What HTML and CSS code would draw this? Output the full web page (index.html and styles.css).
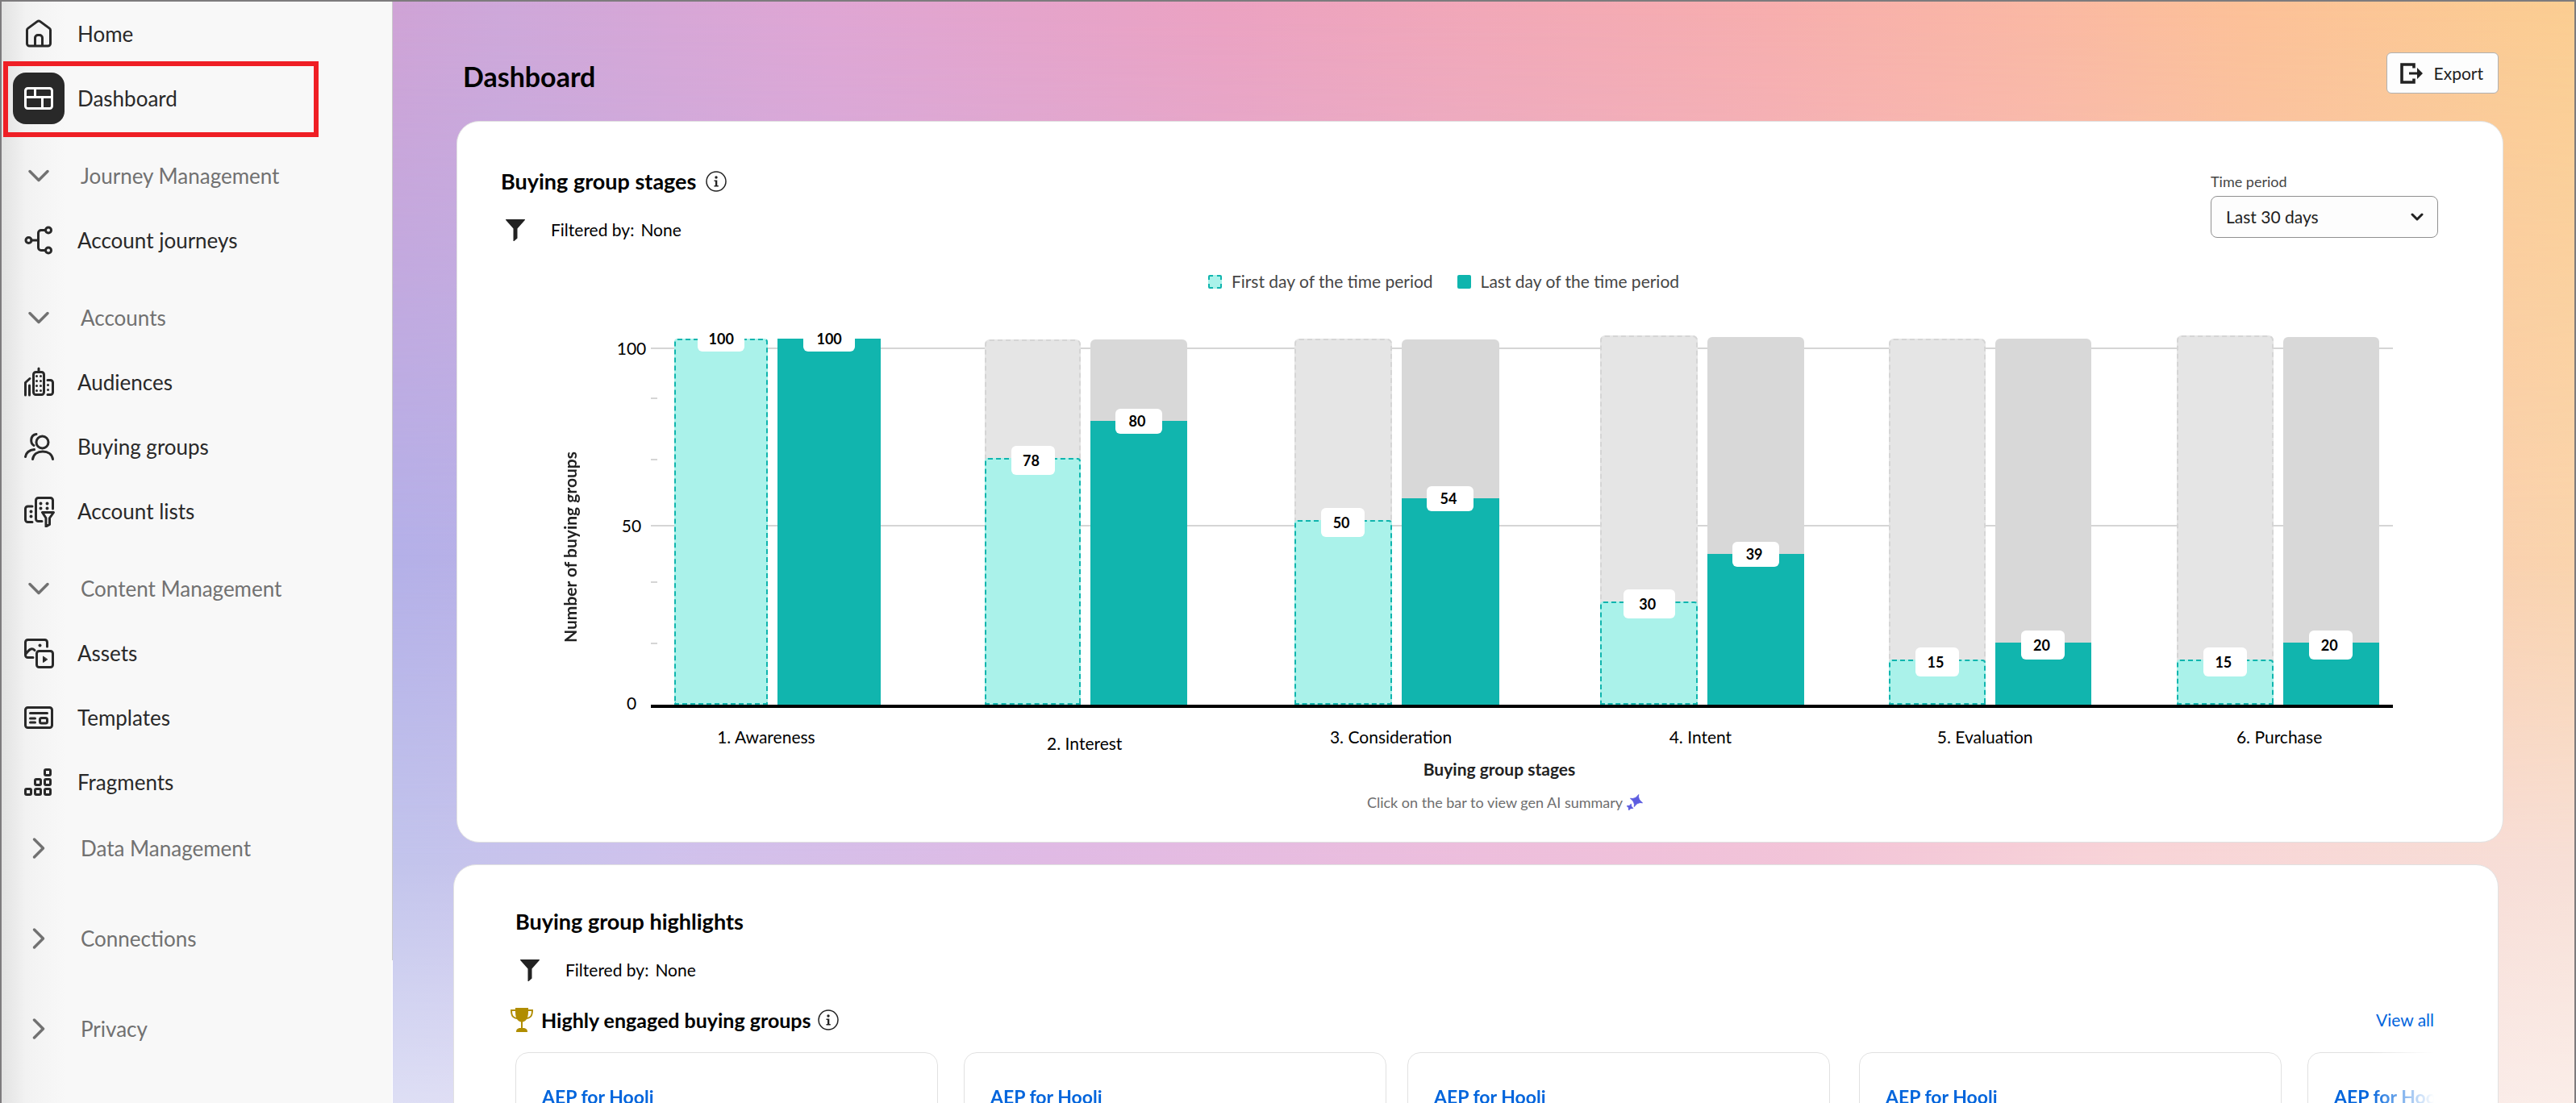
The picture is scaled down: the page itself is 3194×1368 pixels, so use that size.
FILE: index.html
```html
<!DOCTYPE html>
<html lang="en">
<head>
<meta charset="utf-8">
<title>Dashboard</title>
<link rel="stylesheet" href="styles.css">
</head>
<body>
<svg class="sprite" aria-hidden="true">
  <symbol id="chevron-down" viewBox="0 0 40 40"><path d="M9 14.500l11 11 11-11" fill="none" stroke="currentColor" stroke-width="3.500" stroke-linecap="round" stroke-linejoin="round"/></symbol>
  <symbol id="chevron-right" viewBox="0 0 40 40"><path d="M14.500 9l11 11-11 11" fill="none" stroke="currentColor" stroke-width="3.500" stroke-linecap="round" stroke-linejoin="round"/></symbol>
  <symbol id="funnel" viewBox="0 0 24 27"><path d="M.5 0h23a.5.5 0 0 1 .3.900L14.500 11.500V23.500L10.500 27H9.500V11.500L.2.900A.5.5 0 0 1 .5 0z" fill="#222"/></symbol>
  <symbol id="info" viewBox="0 0 26 26"><circle cx="13" cy="13" r="12" fill="none" stroke="#222" stroke-width="1.500"/><circle cx="13" cy="8" r="1.700" fill="#222"/><path d="M10.500 11.500h3.800V18h1.500v1.400h-5.300V18H12v-5.100h-1.500z" fill="#222"/></symbol>
</svg>
<div class="app">
  <nav class="sidebar" aria-label="Main">
    <ul class="nav">
      <li><a class="nav-item" href="#">
        <svg class="nav-icon" viewBox="0 0 40 40"><path d="M5.500 15.500V32a3 3 0 0 0 3 3h23a3 3 0 0 0 3-3V15.500a3 3 0 0 0-1.200-2.400l-11.500-8.500a3 3 0 0 0-3.600 0L6.700 13.100a3 3 0 0 0-1.200 2.400zM15.500 35V25a3.500 3.500 0 0 1 3.500-3.500h2a3.500 3.500 0 0 1 3.500 3.500v10"/></svg>
        <span>Home</span></a></li>
      <li><a class="nav-item nav-item--current" href="#" aria-current="page">
        <span class="nav-tile"><svg class="nav-icon" viewBox="0 0 40 40"><rect x="3.500" y="7.500" width="33" height="25" rx="3"/><path d="M4 18.500h32M15.500 8v10M24.500 19v13"/></svg></span>
        <span>Dashboard</span></a></li>
      <li><button class="nav-section" type="button" aria-expanded="true"><svg class="nav-icon"><use href="#chevron-down"/></svg><span>Journey Management</span></button></li>
      <li><a class="nav-item" href="#">
        <svg class="nav-icon" viewBox="0 0 40 40"><circle cx="7.500" cy="20" r="3.500"/><circle cx="32" cy="7.500" r="3.500"/><circle cx="32" cy="32.500" r="3.500"/><path d="M11 20h8.500M28.500 7.500H23a3.500 3.500 0 0 0-3.500 3.500v18a3.500 3.500 0 0 0 3.500 3.500h5.500"/></svg>
        <span>Account journeys</span></a></li>
      <li><button class="nav-section" type="button" aria-expanded="true"><svg class="nav-icon"><use href="#chevron-down"/></svg><span>Accounts</span></button></li>
      <li><a class="nav-item" href="#">
        <svg class="nav-icon" viewBox="0 0 40 40"><rect x="13.500" y="7.500" width="13" height="28" rx="3"/><path d="M20 3v4M3.500 36V20.500L9 15.500M8.500 24v12M31 17.500h3.500a3 3 0 0 1 3 3v12a3 3 0 0 1-3 3H31"/><path class="dots" d="M17.500 12.500h0M22.500 12.500h0M17.500 18.500h0M22.500 18.500h0M17.500 24.500h0M22.500 24.500h0M17.500 30.500h0M22.500 30.500h0M31.500 23.500h0M31.500 29.500h0"/></svg>
        <span>Audiences</span></a></li>
      <li><a class="nav-item" href="#">
        <svg class="nav-icon" viewBox="0 0 40 40"><circle cx="24.500" cy="14.500" r="7.500"/><path d="M12.500 35.500c1-6 6-9.500 12.500-9.500s11.500 3.500 12.500 9.500M3.500 32.500c.5-4.500 4.500-8.500 11-9M14 18.500c-5-3-4.500-13 3-14"/></svg>
        <span>Buying groups</span></a></li>
      <li><a class="nav-item" href="#">
        <svg class="nav-icon" viewBox="0 0 40 40"><path d="M24 32.500h-4.500a3 3 0 0 1-3-3v-23a3 3 0 0 1 3-3h15a3 3 0 0 1 3 3V17M12 14H6.500a3 3 0 0 0-3 3v13.500a3 3 0 0 0 3 3H12M24.500 21.500h14l-5 7v8l-4.500 2.500v-10.500z"/><path class="dots dots--large" d="M22.500 10.500h0M30.500 10.500h0M22.500 16.500h0M30.500 16.500h0M10.500 20.500h0M10.500 26.500h0"/></svg>
        <span>Account lists</span></a></li>
      <li><button class="nav-section" type="button" aria-expanded="true"><svg class="nav-icon"><use href="#chevron-down"/></svg><span>Content Management</span></button></li>
      <li><a class="nav-item" href="#">
        <svg class="nav-icon" viewBox="0 0 40 40"><path d="M13 25.500H6.500a3 3 0 0 1-3-3v-16a3 3 0 0 1 3-3h21a3 3 0 0 1 3 3V12M4 21c4-5 7-8.500 11-4.500"/><rect x="17.500" y="17.500" width="20" height="20" rx="3"/><path class="dots dots--large" d="M21.500 10.500h0"/><path d="M25.500 24.500v7l5-3.500z" fill="currentColor" stroke-width="1"/></svg>
        <span>Assets</span></a></li>
      <li><a class="nav-item" href="#">
        <svg class="nav-icon" viewBox="0 0 40 40"><rect x="3.500" y="7.500" width="33" height="25" rx="3"/><path d="M9.500 14.500h21M9.500 21h6M9.500 26h6"/><rect x="21.500" y="20.500" width="9" height="6.500" rx="2"/></svg>
        <span>Templates</span></a></li>
      <li><a class="nav-item" href="#">
        <svg class="nav-icon" viewBox="0 0 40 40"><rect x="27.500" y="4.500" width="7" height="7" rx="1.500"/><rect x="15.500" y="16.500" width="7" height="7" rx="1.500"/><rect x="27.500" y="16.500" width="7" height="7" rx="1.500"/><rect x="3.500" y="28.500" width="7" height="7" rx="1.500"/><rect x="15.500" y="28.500" width="7" height="7" rx="1.500"/><rect x="27.500" y="28.500" width="7" height="7" rx="1.500"/></svg>
        <span>Fragments</span></a></li>
    </ul>
    <ul class="nav nav--collapsed">
      <li><button class="nav-section" type="button" aria-expanded="false"><svg class="nav-icon"><use href="#chevron-right"/></svg><span>Data Management</span></button></li>
      <li><button class="nav-section" type="button" aria-expanded="false"><svg class="nav-icon"><use href="#chevron-right"/></svg><span>Connections</span></button></li>
      <li><button class="nav-section" type="button" aria-expanded="false"><svg class="nav-icon"><use href="#chevron-right"/></svg><span>Privacy</span></button></li>
    </ul>
  </nav>

  <main class="main">
    <header class="page-header">
      <h1 class="page-title">Dashboard</h1>
      <button class="export" type="button">
        <svg class="export-icon" viewBox="0 0 28 26"><path d="M17 6.500V2H2v22h15v-4.500" fill="none" stroke="#222" stroke-width="3.600"/><path d="M11 11.500h10V6l7 7-7 7v-5.500H11z" fill="#222"/></svg>
        <span>Export</span>
      </button>
    </header>

    <section class="card stages">
      <div class="card-head">
        <div>
          <div class="title-row"><h2 class="card-title">Buying group stages</h2><svg class="info" role="img" aria-label="Info"><use href="#info"/></svg></div>
          <p class="filter"><svg class="funnel"><use href="#funnel"/></svg><span>Filtered by:</span><span>None</span></p>
        </div>
        <div class="period">
          <label class="period-label" for="period">Time period</label>
          <div class="period-box">
            <select class="period-select" id="period"><option>Last 30 days</option></select>
            <svg class="period-chevron" viewBox="0 0 16 10"><path d="M2 2l6 6 6-6" fill="none" stroke="#222" stroke-width="3" stroke-linecap="round" stroke-linejoin="round"/></svg>
          </div>
        </div>
      </div>

      <ul class="legend">
        <li><span class="swatch swatch--first"></span>First day of the time period</li>
        <li><span class="swatch swatch--last"></span>Last day of the time period</li>
      </ul>

      <div class="chart">
        <div class="axis-title-y"><span>Number of buying groups</span></div>
        <div class="axis-y"><span>100</span><span>50</span><span>0</span></div>
        <div class="plot">
          <div class="grid-lines"><i class="line"></i><i class="tick"></i><i class="tick"></i><i class="line"></i><i class="tick"></i><i class="tick"></i></div>
          <div class="bars">
            <div class="group group--full">
              <div class="track"><div class="bar bar--first" style="height:454px"><b class="value value--short">100</b></div></div>
              <div class="track"><div class="bar bar--last" style="height:454px"><b class="value value--short value--wide">100</b></div></div>
            </div>
            <div class="group">
              <div class="track track--first" style="height:453px"><div class="bar bar--first" style="height:306px"><b class="value">78</b></div></div>
              <div class="track track--last" style="height:453px"><div class="bar bar--last" style="height:352px"><b class="value value--short">80</b></div></div>
            </div>
            <div class="group">
              <div class="track track--first" style="height:454px"><div class="bar bar--first" style="height:229px"><b class="value">50</b></div></div>
              <div class="track track--last" style="height:453px"><div class="bar bar--last" style="height:256px"><b class="value value--short">54</b></div></div>
            </div>
            <div class="group">
              <div class="track track--first" style="height:458px"><div class="bar bar--first" style="height:128px"><b class="value value--wide">30</b></div></div>
              <div class="track track--last" style="height:456px"><div class="bar bar--last" style="height:187px"><b class="value value--short">39</b></div></div>
            </div>
            <div class="group">
              <div class="track track--first" style="height:454px"><div class="bar bar--first" style="height:56px"><b class="value">15</b></div></div>
              <div class="track track--last" style="height:454px"><div class="bar bar--last" style="height:77px"><b class="value">20</b></div></div>
            </div>
            <div class="group">
              <div class="track track--first" style="height:458px"><div class="bar bar--first" style="height:56px"><b class="value">15</b></div></div>
              <div class="track track--last" style="height:456px"><div class="bar bar--last" style="height:77px"><b class="value">20</b></div></div>
            </div>
          </div>
        </div>
        <div class="axis-x">
          <span>1. Awareness</span><span class="lowered">2. Interest</span><span>3. Consideration</span><span>4. Intent</span><span>5. Evaluation</span><span>6. Purchase</span>
        </div>
      </div>
      <p class="axis-title-x">Buying group stages</p>
      <p class="hint">Click on the bar to view gen AI summary
        <svg class="sparkle" viewBox="0 0 20 20"><path d="M14.700.500Q13.500 6.500 19.500 10.700Q13 9.500 9.300 15.500Q10.500 9.500 4.500 5.300Q11 6.500 14.700.500zM5.400 12.200Q4.700 15.500 7.800 17.400Q4.500 16.700 2.600 19.800Q3.300 16.500.200 14.600Q3.500 15.300 5.400 12.200z" fill="#5c5ce0" stroke="#5c5ce0" stroke-linejoin="round"/></svg>
      </p>
    </section>

    <section class="card highlights">
      <h2 class="card-title">Buying group highlights</h2>
      <p class="filter"><svg class="funnel"><use href="#funnel"/></svg><span>Filtered by:</span><span>None</span></p>
      <div class="engaged-head">
        <svg class="trophy" viewBox="0 0 28 30"><path d="M6 0h16v2h6c0 8-2 11-8 12-1 2-3 3-5 3.500V25h2c3 1 4 2 4 5H7c0-3 1-4 4-5h2v-7.500C11 17 9 16 8 14 2 13 0 10 0 2h6zM6 4H2c.2 5 1.500 7 5 8C6.300 10 6 7 6 4zm16 0c0 3-.3 6-1 8 3.500-1 4.800-3 5-8z" fill="#b08d00"/></svg>
        <h3 class="engaged-title">Highly engaged buying groups</h3>
        <svg class="info" role="img" aria-label="Info"><use href="#info"/></svg>
        <a class="view-all" href="#">View all</a>
      </div>
      <ul class="tiles">
        <li class="tile"><a href="#">AEP for Hooli</a></li>
        <li class="tile"><a href="#">AEP for Hooli</a></li>
        <li class="tile"><a href="#">AEP for Hooli</a></li>
        <li class="tile"><a href="#">AEP for Hooli</a></li>
        <li class="tile"><a href="#">AEP for Hooli</a></li>
      </ul>
    </section>
  </main>
</div>
</body>
</html>
```
FILE: styles.css
```css
* { box-sizing: border-box; }

body {
  margin: 0;
  font-family: Lato, "Noto Sans", sans-serif;
  font-size: 21px;
  line-height: 28px;
  color: #000;
}

h1, h2, h3, p, ul { margin: 0; padding: 0; }
ul { list-style: none; }
button, select { font: inherit; color: inherit; }
a { color: #0265dc; text-decoration: none; }
.sprite { display: none; }

.app {
  display: flex;
  height: 100vh;
  overflow: hidden;
  border: 2px solid #7d7b7d;
  border-bottom: 0;
}

/* Sidebar */
.sidebar {
  flex: 0 0 485px;
  border-right: 1px solid;
  border-image: linear-gradient(#ccc 87%, #fff 87%) 1;
  background: linear-gradient(90deg, #e2e2e2, #f2f2f2 30px, #f8f8f8 80px);
}

.nav--collapsed { margin-top: 2px; }
.nav--collapsed li { margin-bottom: 32px; }
.nav:not(.nav--collapsed) .nav-section { margin-top: 16px; }

.nav-item, .nav-section {
  position: relative;
  display: flex;
  align-items: center;
  gap: 28px;
  width: 100%;
  height: 80px;
  padding: 0 0 0 26px;
  border: 0;
  background: none;
  font-size: 26px;
  line-height: 36px;
  text-align: left;
  color: #292929;
}

.nav-section { gap: 32px; color: #717171; }

.nav-icon {
  flex: none;
  width: 40px;
  height: 40px;
  fill: none;
  stroke: currentColor;
  stroke-width: 3;
  stroke-linecap: round;
  stroke-linejoin: round;
}

.dots--large { stroke-width: 4; }

.nav-item--current { gap: 16px; padding-left: 14px; }

.nav-item--current::after {
  content: "";
  position: absolute;
  inset: -6px 91px -8px 2px;
  border: 6px solid #ef1f25;
}

.nav-tile {
  display: grid;
  place-items: center;
  width: 64px;
  height: 64px;
  border-radius: 16px;
  background: #292929;
  color: #fff;
}

/* Main area */
.main {
  position: relative;
  z-index: 0;
  flex: 1;
  min-width: 0;
  padding: 0 88px 0 75px;
  background: linear-gradient(90deg, #d0a3d6, #cfa8da 5%, #e0a6d4 20%, #eca2c2 38%, #f2a8b8 50%, #f7aeae 63%, #fab8a4 75%, #fcc198 85%, #fbce92);
}

.main::before, .main::after {
  content: "";
  position: absolute;
  inset: 0;
  z-index: -1;
}

.main::before {
  background: linear-gradient(90deg, #b4b0e8, #d0b4e4 30%, #f6bcc8 70%, #fad4ac);
  mask-image: linear-gradient(transparent, #000 50%);
}

.main::after {
  background:
    linear-gradient(transparent 78%, rgb(255 255 255 / 45%)),
    linear-gradient(90deg, #c2c4ec, #cfc2ec 12%, #e0bae4 30%, #edbedc 50%, #f2c4d8 65%, #f8d4d8 80%, #f7dfd6);
  mask-image: linear-gradient(transparent 50%, #000 78%);
}

.page-header {
  display: flex;
  justify-content: space-between;
  padding: 63px 6px 25px 12px;
}

.page-title { font-size: 34px; line-height: 60px; }

.export {
  display: flex;
  align-items: center;
  gap: 14px;
  height: 51px;
  padding: 0 18px 0 16px;
  border: 1px solid #b1b1b1;
  border-radius: 6px;
  background: #fdfdfd;
  color: #222;
}

.export-icon { width: 28px; height: 26px; }

.card {
  border: 1px solid #e1e1e1;
  border-radius: 28px;
  background: #fff;
}

.stages {
  margin-left: 4px;
  padding: 56px 80px 35px 54px;
}

.card-head { display: flex; justify-content: space-between; }
.title-row { display: flex; align-items: center; gap: 12px; }
.card-title { font-size: 27px; line-height: 36px; }
.info { width: 26px; height: 26px; }

.filter {
  display: flex;
  align-items: center;
  gap: 8px;
  margin-top: 24px;
  padding-left: 6px;
  line-height: 36px;
}

.funnel { width: 24px; height: 27px; margin-right: 24px; }

.period { width: 282px; }
.period-label { display: block; font-size: 18px; line-height: 36px; color: #464646; }
.period-box { position: relative; }

.period-select {
  appearance: none;
  width: 100%;
  height: 52px;
  padding: 0 18px;
  border: 1px solid #909090;
  border-radius: 8px;
  background: #fdfdfd;
  color: #222;
}

.period-chevron {
  position: absolute;
  top: 21px;
  right: 18px;
  width: 16px;
  height: 10px;
}

.legend {
  display: flex;
  justify-content: center;
  gap: 30px;
  margin-top: 32px;
  padding-right: 64px;
  color: #464646;
}

.legend li { display: flex; align-items: center; gap: 12px; }
.swatch { width: 17px; height: 17px; border-radius: 2px; background: #0fb5ae; }
.swatch--first { border: 2px dashed #0fb5ae; background: #aaf2ea; }

/* Chart */
.chart {
  display: grid;
  grid-template-columns: 100px 86px 1fr;
  grid-template-rows: 462px auto;
  margin: 53px 56px 0 0;
}

.axis-title-y { display: grid; place-items: center end; padding-top: 62px; }
.axis-title-y span { writing-mode: vertical-rl; transform: rotate(180deg); font-weight: 700; color: #222; }

.axis-y {
  display: flex;
  flex-direction: column;
  justify-content: space-between;
  justify-self: end;
  width: 48px;
  margin: 2px 0 -8px;
  text-align: center;
}

.plot { display: grid; border-bottom: 4px solid #000; }
.grid-lines, .bars { grid-area: 1 / 1; }

.grid-lines {
  display: grid;
  align-content: start;
  grid-template-rows: 62px 76px 82px 70px 76px 60px;
  padding-top: 15px;
}

.line { height: 2px; background: #d5d5d5; }
.tick { width: 8px; height: 2px; background: #d5d5d5; }

.bars {
  display: grid;
  grid-template-columns: 29fr 256fr 129fr 251fr 133fr 254fr 126fr 253fr 105fr 251fr 106fr 251fr 17fr;
}

.group {
  grid-row: 1;
  display: grid;
  grid-template-columns: 1fr 1fr;
  gap: 12px;
  align-items: end;
}

.group:nth-child(1) { grid-column: 2; }
.group:nth-child(2) { grid-column: 4; }
.group:nth-child(3) { grid-column: 6; }
.group:nth-child(4) { grid-column: 8; }
.group:nth-child(5) { grid-column: 10; }
.group:nth-child(6) { grid-column: 12; }
.group--full { grid-template-columns: 116fr 127fr; }

.track { display: flex; align-items: flex-end; border-radius: 6px 6px 0 0; }
.track--first { background: #e5e5e5; outline: 2px dashed #d5d5d5; outline-offset: -2px; }
.track--last { background: #d8d8d8; }
.bar { position: relative; flex: 1; }
.bar--first { border: 2px dashed #0fb5ae; border-radius: 4px 4px 0 0; background: #aaf2ea; }
.bar--last { background: #11b5ae; border: 2px solid #11b5ae; }

.value {
  position: absolute;
  top: -17px;
  left: 50%;
  width: 54px;
  padding-right: 4px;
  margin-left: -27px;
  border-radius: 6px;
  background: #fff;
  font-size: 18px;
  line-height: 36px;
  text-align: center;
}

.value--short { line-height: 31px; width: 58px; margin-left: -29px; }
.value--wide { width: 64px; margin-left: -32px; }
.group--full .value { padding-right: 0; }

.axis-x {
  grid-column: 3;
  display: grid;
  grid-template-columns: 43fr 200fr 195fr 200fr 180fr 200fr 184fr 200fr 153fr 200fr 165fr 200fr 41fr;
  padding-top: 22px;
  text-align: center;
}

.axis-x span { grid-row: 1; white-space: nowrap; }
.axis-x span:nth-child(1) { grid-column: 2; }
.axis-x span:nth-child(2) { grid-column: 4; }
.axis-x span:nth-child(3) { grid-column: 6; }
.axis-x span:nth-child(4) { grid-column: 8; }
.axis-x span:nth-child(5) { grid-column: 10; }
.axis-x span:nth-child(6) { grid-column: 12; }
.axis-x .lowered { padding-top: 8px; }

.axis-title-x { margin-top: 4px; padding-left: 74px; font-weight: 700; text-align: center; color: #222; }

.hint {
  display: flex;
  justify-content: center;
  align-items: center;
  gap: 5px;
  margin-top: 13px;
  padding-left: 88px;
  font-size: 18px;
  color: #6e6e6e;
}

.sparkle { width: 20px; height: 20px; }

/* Highlights */
.highlights {
  margin: 27px 6px 0 0;
  padding: 52px 79px 76px 76px;
}

.engaged-head { display: flex; align-items: center; margin-top: 26px; line-height: 36px; }
.trophy { width: 28px; height: 30px; margin: 0 10px 0 -6px; }
.engaged-title { margin-right: 8px; font-size: 25px; }
.view-all { margin-left: auto; }

.tiles {
  display: grid;
  grid-template-columns: 556px 550px 560px 556px 524px;
  margin-top: 22px;
  overflow: hidden;
  mask-image: linear-gradient(270deg, transparent, #000 80px);
}

.tile {
  width: 524px;
  height: 240px;
  padding: 40px 32px;
  border: 1px solid #e1e1e1;
  border-radius: 16px;
  font-size: 23px;
  font-weight: 700;
}
```
